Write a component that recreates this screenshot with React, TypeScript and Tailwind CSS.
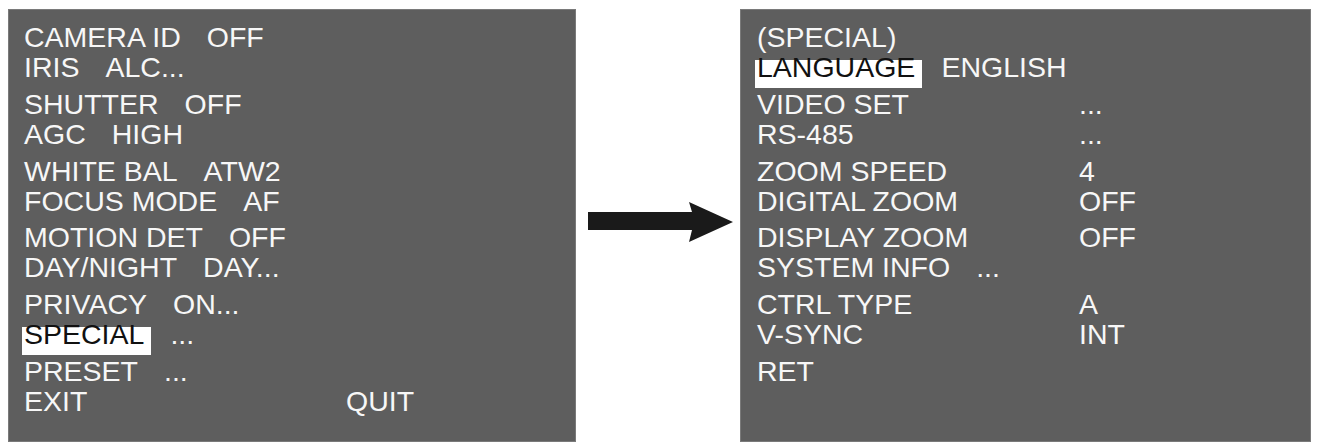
import React from "react";

type Item = { label: string; value?: string; col?: boolean; hl?: boolean };

const font = { fontFamily: '"Liberation Sans", Arial, sans-serif' };

function Row({ item }: { item: Item }) {
  const label = item.hl ? (
    <span className="relative inline-block">
      <span className="absolute left-[-2px] right-[-7px] top-[8px] h-[28px] bg-white" />
      <span className="relative text-[#111]">{item.label}</span>
    </span>
  ) : (
    <span>{item.label}</span>
  );
  if (item.col) {
    return (
      <div className="grid h-[30px] grid-cols-[322px_auto] leading-[30px] whitespace-pre">
        {label}
        <span>{item.value}</span>
      </div>
    );
  }
  return (
    <div className="flex h-[30px] gap-[26px] leading-[30px] whitespace-pre">
      {label}
      {item.value ? <span>{item.value}</span> : null}
    </div>
  );
}

function Panel({ groups, className }: { groups: Item[][]; className: string }) {
  return (
    <div
      className={`flex flex-col gap-[6.8px] border border-[#7a7a7a] bg-[#5e5e5e] pt-[12px] text-[28.5px] text-[#f7f7f7] ${className}`}
      style={font}
    >
      {groups.map((g, i) => (
        <div key={i} className="flex flex-col">
          {g.map((it, j) => (
            <Row key={j} item={it} />
          ))}
        </div>
      ))}
    </div>
  );
}

const left: Item[][] = [
  [
    { label: "CAMERA ID", value: "OFF" },
    { label: "IRIS", value: "ALC..." },
  ],
  [
    { label: "SHUTTER", value: "OFF" },
    { label: "AGC", value: "HIGH" },
  ],
  [
    { label: "WHITE BAL", value: "ATW2" },
    { label: "FOCUS MODE", value: "AF" },
  ],
  [
    { label: "MOTION DET", value: "OFF" },
    { label: "DAY/NIGHT", value: "DAY..." },
  ],
  [
    { label: "PRIVACY", value: "ON..." },
    { label: "SPECIAL", value: "...", hl: true },
  ],
  [
    { label: "PRESET", value: "..." },
    { label: "EXIT", value: "QUIT", col: true },
  ],
];

const right: Item[][] = [
  [
    { label: "(SPECIAL)" },
    { label: "LANGUAGE", value: "ENGLISH", hl: true },
  ],
  [
    { label: "VIDEO SET", value: "...", col: true },
    { label: "RS-485", value: "...", col: true },
  ],
  [
    { label: "ZOOM SPEED", value: "4", col: true },
    { label: "DIGITAL ZOOM", value: "OFF", col: true },
  ],
  [
    { label: "DISPLAY ZOOM", value: "OFF", col: true },
    { label: "SYSTEM INFO", value: "..." },
  ],
  [
    { label: "CTRL TYPE", value: "A", col: true },
    { label: "V-SYNC", value: "INT", col: true },
  ],
  [{ label: "RET" }],
];

export default function App() {
  return (
    <div className="flex h-[448px] w-[1317px] bg-white pl-[8px] pt-[9px]">
      <Panel groups={left} className="h-[433px] w-[568px] pl-[15px]" />
      <div className="w-[164px] pl-[12px] pt-[193px]">
        <svg width="146" height="41" viewBox="0 0 146 41">
          <polygon points="0,10 104,10 101,0 145,20 101,40 104,28 0,28" fill="#1a1a1a" />
        </svg>
      </div>
      <Panel groups={right} className="h-[433px] w-[571px] pl-[16px]" />
    </div>
  );
}
